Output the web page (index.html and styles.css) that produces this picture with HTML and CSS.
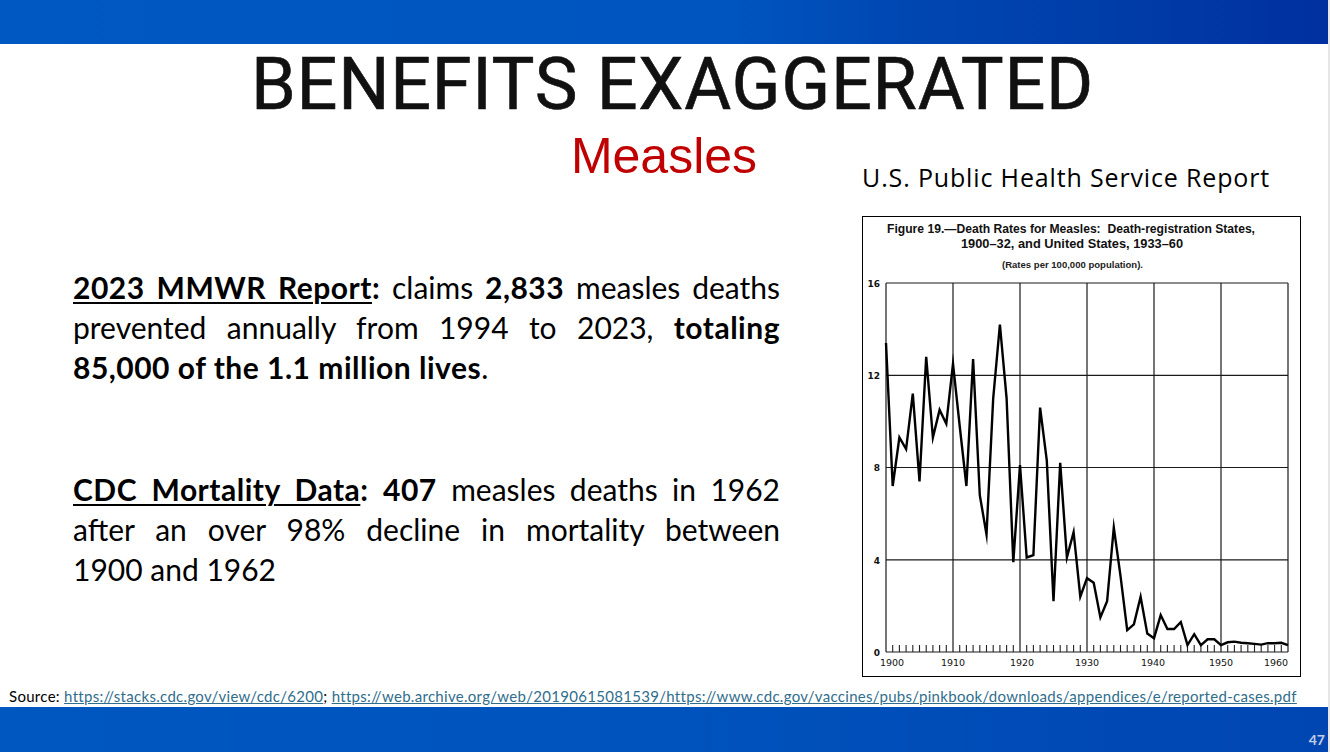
FILE: index.html
```html
<!DOCTYPE html>
<html lang="en">
<head>
<meta charset="utf-8">
<title>Benefits Exaggerated – Measles</title>
<link rel="stylesheet" href="styles.css">
</head>
<body>
<div class="slide">
  <header class="topbar"></header>

  <h1 class="title">BENEFITS EXAGGERATED</h1>

  <div class="subhead">
    <div class="spacer"></div>
    <h2 class="measles">Measles</h2>
    <h3 class="report">U.S. Public Health Service Report</h3>
  </div>

  <main class="body">
    <section class="text">
      <p class="para">
        <span class="line"><b><u>2023 MMWR Report</u>:</b> claims <b>2,833</b> measles deaths</span>
        <span class="line">prevented annually from 1994 to 2023, <b>totaling</b></span>
        <span class="line last"><b>85,000 of the 1.1 million lives</b>.</span>
      </p>
      <p class="para">
        <span class="line"><b><u>CDC Mortality Data</u>: 407</b> measles deaths in 1962</span>
        <span class="line">after an over 98% decline in mortality between</span>
        <span class="line last">1900 and 1962</span>
      </p>
    </section>

    <figure class="chart">
      <svg width="439" height="461" viewBox="0 0 439 461" xmlns="http://www.w3.org/2000/svg">
        <text class="ct1" x="25" y="17" textLength="368" lengthAdjust="spacingAndGlyphs">Figure 19.—Death Rates for Measles:&#160; Death-registration States,</text>
        <text class="ct1" x="99" y="32" textLength="222" lengthAdjust="spacingAndGlyphs">1900–32, and United States, 1933–60</text>
        <text class="ct2" x="140" y="52" textLength="141" lengthAdjust="spacingAndGlyphs">(Rates per 100,000 population).</text>

        <g class="grid">
          <line x1="24" y1="67" x2="426" y2="67"/>
          <line x1="24" y1="159.3" x2="426" y2="159.3"/>
          <line x1="24" y1="251.5" x2="426" y2="251.5"/>
          <line x1="24" y1="343.8" x2="426" y2="343.8"/>
          <line x1="24" y1="436" x2="426" y2="436"/>
          <line x1="24" y1="67" x2="24" y2="436"/>
          <line x1="91" y1="67" x2="91" y2="436"/>
          <line x1="158" y1="67" x2="158" y2="436"/>
          <line x1="225" y1="67" x2="225" y2="436"/>
          <line x1="292" y1="67" x2="292" y2="436"/>
          <line x1="359" y1="67" x2="359" y2="436"/>
          <line x1="426" y1="67" x2="426" y2="436"/>
        </g>

        <g class="ticks" id="ticks"></g>

        <g class="ylab">
          <text x="18" y="71">16</text>
          <text x="18" y="163">12</text>
          <text x="18" y="255">8</text>
          <text x="18" y="348">4</text>
          <text x="18" y="440">0</text>
        </g>
        <g class="xlab">
          <text x="30" y="450">1900</text>
          <text x="91" y="450">1910</text>
          <text x="160" y="450">1920</text>
          <text x="225" y="450">1930</text>
          <text x="291" y="450">1940</text>
          <text x="359" y="450">1950</text>
          <text x="414" y="450">1960</text>
        </g>

        <polyline class="data" points="24,127 30.7,270 37.4,221.5 44.1,233.1 50.8,177.7 57.5,265.4 64.2,140.8 70.9,221.5 77.6,193.9 84.3,207.7 91,147.7 97.7,210 104.4,270 111.1,143.1 117.8,279.2 124.5,318.4 131.2,182.3 137.9,108.5 144.6,182.3 151.3,346.1 158,249.2 164.7,341.5 171.4,339.1 178.1,191.6 184.8,244.6 191.5,385.3 198.2,246.9 204.9,341.5 211.6,316.1 218.3,380.7 225,362.2 231.7,366.8 238.4,401.4 245.1,385.3 251.8,311.5 258.5,359.9 265.2,414.1 271.9,408.3 278.6,380.7 285.3,417.6 292,422.2 298.7,399.1 305.4,413 312.1,413 318.8,406 325.5,429.1 332.2,418.2 338.9,429.1 345.6,423.3 352.3,423.3 359,429.1 365.7,426.3 372.4,425.6 379.1,426.8 385.8,427.2 392.5,427.9 399.2,428.6 405.9,427.2 412.6,427.2 419.3,426.8 426,429.1"/>
      </svg>
    </figure>
  </main>

  <p class="source">Source: <a href="#">https://stacks.cdc.gov/view/cdc/6200</a>; <a href="#">https://web.archive.org/web/20190615081539/https://www.cdc.gov/vaccines/pubs/pinkbook/downloads/appendices/e/reported-cases.pdf</a></p>

  <footer class="bottombar"><span class="pageno">47</span></footer>
</div>
<script>
  (function () {
    var g = document.getElementById('ticks');
    var ns = 'http://www.w3.org/2000/svg';
    for (var i = 1; i < 60; i++) {
      if (i % 10 === 0) continue;
      var x = 24 + 6.7 * i;
      var l = document.createElementNS(ns, 'line');
      l.setAttribute('x1', x); l.setAttribute('x2', x);
      l.setAttribute('y1', 429); l.setAttribute('y2', 436);
      g.appendChild(l);
    }
  })();
</script>
</body>
</html>
```

FILE: styles.css
```css
* { box-sizing: border-box; }

html, body {
  margin: 0;
  padding: 0;
  background: #e6e6e6;
}

.slide {
  width: 1328px;
  height: 752px;
  background: #ffffff;
  display: flex;
  flex-direction: column;
  overflow: hidden;
  font-family: Lato, "Open Sans", sans-serif;
  color: #000;
}

.topbar {
  height: 44px;
  flex: none;
  background: linear-gradient(90deg, #0058c2 0%, #0055bf 55%, #0047b2 68%, #003ca8 85%, #00309f 100%);
}

.title {
  margin: 5px 0 0 0;
  padding-left: 17px;
  height: 72px;
  flex: none;
  font-family: Roboto, "Liberation Sans", sans-serif;
  font-weight: 400;
  font-size: 72px;
  line-height: 72px;
  text-align: center;
  color: #111;
  letter-spacing: 0.7px;
  -webkit-text-stroke: 0.6px #111;
}

.subhead {
  flex: none;
  display: grid;
  grid-template-columns: 1fr auto 1fr;
  align-items: start;
}

.measles {
  margin: 0;
  padding-top: 7px;
  font-family: "Liberation Sans", Arial, sans-serif;
  font-weight: 400;
  font-size: 50px;
  line-height: 57px;
  color: #c00000;
}

.report {
  margin: 0;
  padding-top: 42px;
  padding-left: 105px;
  font-family: "Open Sans", Lato, sans-serif;
  font-weight: 400;
  font-size: 25px;
  line-height: 29px;
  letter-spacing: 0.85px;
  white-space: nowrap;
}

.body {
  flex: 1;
  display: grid;
  grid-template-columns: 707px 439px;
  column-gap: 82px;
  padding-left: 73px;
}

.text {
  display: flex;
  flex-direction: column;
  gap: 82px;
  padding-top: 75px;
}

.para {
  margin: 0;
  font-size: 30px;
  line-height: 40px;
}

.line {
  display: block;
  text-align: justify;
  text-align-last: justify;
  white-space: nowrap;
}

.line.last {
  text-align-last: left;
}

.para b { font-weight: 700; letter-spacing: 0.5px; }
.para u { text-decoration-thickness: 2px; text-underline-offset: 3px; }

.chart {
  margin: 24px 0 0 0;
  width: 439px;
  height: 461px;
  border: 1.5px solid #000;
}

.chart svg {
  display: block;
  margin: -1.5px 0 0 -1.5px;
}

.ct1 {
  font-family: "Liberation Sans", Arial, sans-serif;
  font-weight: 700;
  font-size: 12px;
  fill: #111;
}

.ct2 {
  font-family: "Liberation Sans", Arial, sans-serif;
  font-weight: 700;
  font-size: 8.5px;
  fill: #222;
}

.grid line {
  stroke: #1a1a1a;
  stroke-width: 1.2;
}

.ticks line {
  stroke: #222;
  stroke-width: 1.1;
}

.ylab text {
  font-family: "DejaVu Sans", sans-serif;
  font-weight: 700;
  font-size: 9px;
  text-anchor: end;
  fill: #111;
}

.xlab text {
  font-family: "DejaVu Sans", sans-serif;
  font-size: 9.5px;
  text-anchor: middle;
  fill: #111;
}

.data {
  fill: none;
  stroke: #000;
  stroke-width: 2.4;
  stroke-linejoin: miter;
  stroke-miterlimit: 10;
}

.source {
  flex: none;
  margin: 0 0 1px 0;
  padding-left: 9px;
  height: 20px;
  font-family: Lato, sans-serif;
  font-size: 15px;
  line-height: 20px;
  letter-spacing: 0.3px;
  white-space: nowrap;
}

.source a {
  color: #2f6d8c;
  text-decoration: underline;
}

.bottombar {
  height: 45px;
  flex: none;
  background: linear-gradient(90deg, #0057c0 0%, #0053bc 50%, #004ab6 80%, #0046b2 100%);
  display: flex;
  align-items: center;
  justify-content: flex-end;
  padding: 0 3px 0 0;
}

.pageno {
  color: #c3cde6;
  font-family: Lato, sans-serif;
  font-weight: 700;
  font-size: 14px;
  margin-top: 20px;
}
```
